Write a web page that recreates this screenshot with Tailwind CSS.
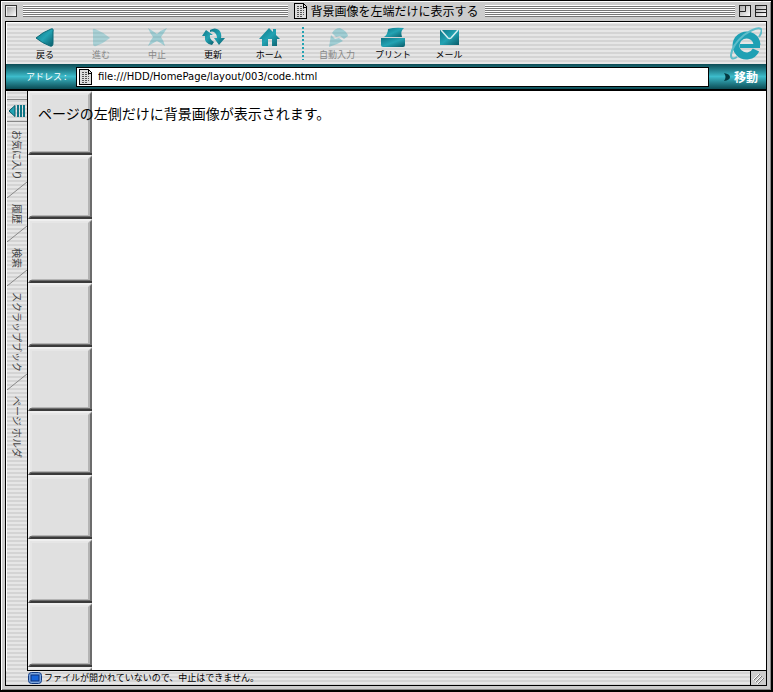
<!DOCTYPE html>
<html lang="ja">
<head>
<meta charset="utf-8">
<meta name="viewport" content="width=device-width, initial-scale=1">
<title>背景画像を左端だけに表示する</title>
<script src="https://cdn.jsdelivr.net/npm/@tailwindcss/browser@4"></script>
</head>
<body class="h-screen overflow-hidden bg-black font-['Noto_Sans_CJK_JP',sans-serif] text-black">
<!-- Shared gradient for the toolbar icons -->
<svg class="absolute size-0">
    <defs>
        <linearGradient id="teal" x1="0" y1="0" x2="1" y2="1">
            <stop offset="0" stop-color="#0d7485"/>
            <stop offset="0.5" stop-color="#23a3b3"/>
            <stop offset="1" stop-color="#0a5b69"/>
        </linearGradient>
    </defs>
</svg>

<div class="flex h-full flex-col pt-px pr-0.5 pb-0.5 pl-px">
    <div class="flex min-h-0 flex-1 flex-col border-t border-l border-white bg-[#ccc] pr-1 pb-1 pl-[3px] shadow-[inset_-1px_-1px_0_#888]">

        <!-- Title bar -->
        <header class="flex h-[19px] shrink-0 items-center pb-px">
            <div class="flex flex-1 items-center gap-1.5">
                <button aria-label="閉じる" class="size-3 border border-[#333] bg-linear-to-br from-[#999] to-white shadow-[inset_1px_1px_0_#eee]"></button>
                <div class="h-3 flex-1 bg-[repeating-linear-gradient(#fff_0_1px,#777_1px_2px)]"></div>
            </div>
            <div class="flex items-center gap-1 px-1.5">
                <svg class="h-4 w-[13px]" viewBox="0 0 13 16" shape-rendering="crispEdges">
                    <path d="M.5.5h9l3 3v12H.5z" fill="#ddd" stroke="#000"/>
                    <path d="M9.5 0v4h3" fill="none" stroke="#000"/>
                    <path d="M3 3.500h5M3 5.500h7M3 7.500h7M3 9.500h7M3 11.500h7M3 13.500h5" stroke="#555" stroke-dasharray="2 1"/>
                </svg>
                <h1 class="text-[12px] leading-4">背景画像を左端だけに表示する</h1>
            </div>
            <div class="flex flex-1 items-center gap-1">
                <div class="h-3 flex-1 bg-[repeating-linear-gradient(#fff_0_1px,#777_1px_2px)]"></div>
                <button aria-label="ズーム" class="size-3 border border-[#222] bg-linear-to-br from-[#aaa] to-white">
                    <svg class="size-2.5" viewBox="0 0 10 10"><path d="M0 5.500h5.500V0" fill="none" stroke="#222"/></svg>
                </button>
                <button aria-label="たたむ" class="size-3 border border-[#222] bg-linear-to-br from-[#aaa] to-white">
                    <svg class="size-2.5" viewBox="0 0 10 10"><path d="M0 3.500h10M0 6.500h10" fill="none" stroke="#222"/></svg>
                </button>
            </div>
        </header>

        <div class="flex min-h-0 flex-1 flex-col border border-black bg-[repeating-linear-gradient(#e6e6e6_0_2px,#d4d4d4_2px_4px)]">

            <!-- Toolbar -->
            <nav class="flex h-[42px] shrink-0 border-t border-l border-white pr-1 pl-2.5 text-[9px] leading-3">
                <button class="flex w-14 flex-col items-center gap-0.5 pt-1">
                    <svg class="h-5 w-6" viewBox="0 0 24 20"><path d="M3 11Q10 5 18 2Q21 1 20 5V16Q20 20 17 19Q9 16 3 11Z" fill="url(#teal)" stroke="#0d6a78"/></svg>
                    <span>戻る</span>
                </button>
                <button disabled class="flex w-14 flex-col items-center gap-0.5 pt-1 text-[#888]">
                    <svg class="h-5 w-6 opacity-30" viewBox="0 0 24 20"><path d="M21 11Q14 5 6 2Q3 1 4 5V16Q4 20 7 19Q15 16 21 11Z" fill="#23a3b3"/></svg>
                    <span>進む</span>
                </button>
                <button disabled class="flex w-14 flex-col items-center gap-0.5 pt-1 text-[#888]">
                    <svg class="h-5 w-6 opacity-35" viewBox="0 0 24 20"><path d="M3 1Q8 4 12 7Q16 3 22 1Q19 6 16 10Q19 14 20 19Q16 16 12 14Q8 16 3 19Q5 14 8 10Q5 6 3 1Z" fill="#23a3b3"/></svg>
                    <span>中止</span>
                </button>
                <button class="flex w-14 flex-col items-center gap-0.5 pt-1">
                    <svg class="h-5 w-6" viewBox="0 0 24 20"><path d="M11 18Q3 17 4 9H1L5 3L12 8H9Q8 12 13 15Z" fill="url(#teal)"/><path d="M9 3Q14 0 18 3Q21 6 20 11H24L18 18L13 11H16Q16 7 13 5Q11 4 9 5Z" fill="url(#teal)"/></svg>
                    <span>更新</span>
                </button>
                <button class="flex w-14 flex-col items-center gap-0.5 pt-1">
                    <svg class="h-5 w-6" viewBox="0 0 24 20"><path d="M12 1L16 5V2H19V8L23 12H20V19H15V12H11V19H5V12H2Z" fill="url(#teal)"/></svg>
                    <span>ホーム</span>
                </button>
                <div class="mx-[5px] my-1 w-0.5 bg-[repeating-linear-gradient(#23a3b3_0_2px,transparent_2px_4px)]"></div>
                <button disabled class="flex w-14 flex-col items-center gap-0.5 pt-1 text-[#888]">
                    <svg class="h-5 w-6 opacity-35" viewBox="0 0 24 20"><path d="M7 6Q10 1 15 1Q22 4 23 9L19 12L15 9L11 10Z" fill="#23a3b3"/><path d="M6 8L10 12L14 11L18 14L12 17L4 20Z" fill="#23a3b3"/></svg>
                    <span>自動入力</span>
                </button>
                <button class="flex w-14 flex-col items-center gap-0.5 pt-1">
                    <svg class="h-5 w-7" viewBox="0 0 28 20"><path d="M9 2Q16 0 25 1Q21 4 23 10H5Q9 7 9 2Z" fill="url(#teal)"/><path d="M2 11H26V18Q26 20 24 20H4Q2 20 2 18Z" fill="url(#teal)"/></svg>
                    <span>プリント</span>
                </button>
                <button class="flex w-14 flex-col items-center gap-0.5 pt-1">
                    <svg class="h-5 w-6" viewBox="0 0 24 20"><path d="M3 3H22V18H3Z" fill="url(#teal)"/><path d="M4 3L11 11Q12.500 12 14 11L21 3" fill="none" stroke="#d8eef0" stroke-width="1.500"/></svg>
                    <span>メール</span>
                </button>
                <!-- Browser logo -->
                <svg class="mt-1 ml-auto h-[34px] w-8" viewBox="0 0 32 34" fill="none" aria-label="Internet Explorer">
                    <path d="M26 23A10.500 10.500 0 1 1 27 18" stroke="#1fa0b4" stroke-width="7"/>
                    <path d="M10 19H30" stroke="#1fa0b4" stroke-width="4"/>
                    <path d="M7 30Q1 34 1 28Q2 18 14 8Q27-1 31 2Q33 4 29 10" stroke="#5fbdca" stroke-width="2"/>
                </svg>
            </nav>

            <!-- Address bar -->
            <form class="flex h-[27px] shrink-0 items-center border-b-2 border-black bg-linear-to-b from-[#0c4c55] via-[#3dbccb] to-[#0c4c55] text-white">
                <label for="address" class="w-[70px] shrink-0 pl-5 text-[9px] leading-3 whitespace-pre">アドレス :</label>
                <div class="flex h-5 min-w-0 flex-1 items-center gap-1.5 border border-black bg-white pl-0.5">
                    <svg class="h-4 w-[13px] shrink-0" viewBox="0 0 13 16" shape-rendering="crispEdges">
                        <path d="M.5.5h9l3 3v12H.5z" fill="#ddd" stroke="#000"/>
                        <path d="M9.5 0v4h3" fill="none" stroke="#000"/>
                        <path d="M3 3.500h5M3 5.500h7M3 7.500h7M3 9.500h7M3 11.500h7M3 13.500h5" stroke="#555" stroke-dasharray="2 1"/>
                    </svg>
                    <input id="address" type="text" value="file:///HDD/HomePage/layout/003/code.html" class="h-4 min-w-0 flex-1 font-['DejaVu_Sans',sans-serif] text-[10px] text-black outline-none">
                </div>
                <button class="flex w-[57px] shrink-0 items-center justify-end gap-1 pr-2 text-[12px] leading-4 font-bold">
                    <svg class="h-2 w-1.5" viewBox="0 0 6 8"><path d="M0 0Q6 1 6 4T0 8Q3 4 0 0Z" fill="#043a42"/></svg>
                    移動
                </button>
            </form>

            <div class="flex min-h-0 flex-1">
                <!-- Explorer bar -->
                <aside class="flex w-[21px] shrink-0 flex-col items-center border-l border-white text-[10px] leading-5 text-[#444] [text-orientation:sideways]">
                    <button aria-label="エクスプローラバー" class="mt-2 flex h-[23px] w-full items-center justify-center border-y border-t-[#888] border-b-[#888]">
                        <svg class="h-3.5 w-4" viewBox="0 0 16 14"><path d="M0 7L6 1.500V12.500Z" fill="#23a3b3" stroke="#075866"/><path d="M9 1V13M12 1V13M15 1V13" stroke="#0d7485" stroke-width="2"/></svg>
                    </button>
                    <a href="#" class="mt-2 h-[52px] [writing-mode:vertical-rl]">お気に入り</a>
                    <svg class="h-4 w-full" viewBox="0 0 20 16"><path d="M0 16L20 0" stroke="#888"/></svg>
                    <a href="#" class="h-7 pt-1.5 [writing-mode:vertical-rl]">履歴</a>
                    <svg class="h-4 w-full" viewBox="0 0 20 16"><path d="M0 16L20 0" stroke="#888"/></svg>
                    <a href="#" class="h-7 pt-1.5 [writing-mode:vertical-rl]">検索</a>
                    <svg class="h-4 w-full" viewBox="0 0 20 16"><path d="M0 16L20 0" stroke="#888"/></svg>
                    <a href="#" class="h-[88px] pt-1.5 [writing-mode:vertical-rl]">スクラップブック</a>
                    <svg class="h-4 w-full" viewBox="0 0 20 16"><path d="M0 16L20 0" stroke="#888"/></svg>
                    <a href="#" class="h-20 pt-1.5 [writing-mode:vertical-rl]">ページ ホルダ</a>
                </aside>

                <!-- Page -->
                <main class="relative min-w-0 flex-1 border-b border-l border-black bg-white">
                    <svg class="absolute inset-y-0 left-0 h-full w-16">
                        <defs>
                            <pattern id="tile" width="64" height="64" patternUnits="userSpaceOnUse">
                                <path d="M0 0H64V64H0Z" fill="#e0e0e0"/>
                                <path d="M0 0H64L60 4H4V60L0 64Z" fill="#e6e6e6"/>
                                <path d="M0 0H64L62 2H2V62L0 64Z" fill="#efefef"/>
                                <path d="M64 0V64H0L4 60H60V4Z" fill="#b4b4b4"/>
                                <path d="M64 1V64H0L2 61H62V3Z" fill="#6c6c6c"/>
                                <path d="M1 64L3 62H64V64Z" fill="#3a3a3a"/>
                            </pattern>
                        </defs>
                        <rect width="64" height="100%" fill="url(#tile)"/>
                    </svg>
                    <p class="relative px-2.5 pt-3 text-[14px] leading-5">ページの左側だけに背景画像が表示されます。</p>
                </main>
            </div>

            <!-- Status bar -->
            <footer class="flex h-3.5 shrink-0 items-center gap-0.5 pl-[22px] text-[9px] leading-3">
                <svg class="h-3 w-3.5" viewBox="0 0 14 12"><rect x=".5" y=".5" width="13" height="11" rx="3" fill="#7ba6e0" stroke="#123a80"/><rect x="3" y="3" width="8" height="6" fill="#1764d8" stroke="#0a2f78"/></svg>
                <p>ファイルが開かれていないので、中止はできません。</p>
                <svg class="ml-auto h-full w-4 border-l border-black bg-[#ccc]" viewBox="0 0 15 14"><path d="M3 9L9 3M5 11L11 5M7 13L13 7" stroke="#777"/><path d="M2 9L8 3M4 11L10 5M6 13L12 7" stroke="#fff"/></svg>
            </footer>
        </div>
    </div>
</div>
</body>
</html>
